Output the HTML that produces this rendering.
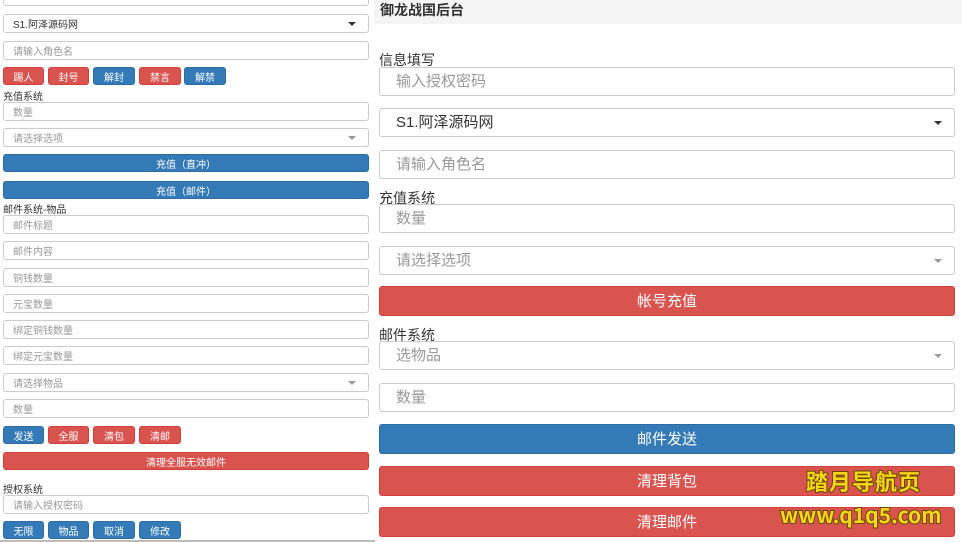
<!DOCTYPE html>
<html><head><meta charset="utf-8"><style>
body{margin:0;width:962px;height:542px;overflow:hidden;background:#fff;font-family:"Liberation Sans","Noto Sans CJK SC",sans-serif;position:relative;line-height:1}
.a{position:absolute;box-sizing:border-box}
.in{border:1px solid #ccc;border-radius:3px;background:#fff;color:#999;padding-left:9px;display:flex;align-items:center;line-height:normal}
.s{font-size:10px;height:19px}
.b{font-size:15px;height:29px;padding-left:16px;padding-bottom:2px}
.dk{color:#333}
.car::after{content:"";position:absolute;right:12px;top:50%;margin-top:-2px;border:4px solid transparent;border-top:4px solid #999;border-bottom:0}
.dkc::after{border-top-color:#333}
.bt{border-radius:3px;color:#fff;display:flex;align-items:center;justify-content:center;font-size:10px;height:18px;line-height:normal}
.r{background:#d9534f;border:1px solid #d43f3a}
.u{background:#337ab7;border:1px solid #2e6da4}
.lb{font-size:10px;color:#333}
.big{height:30px;font-size:15px;padding-bottom:1px}
.lbb{font-size:14px;color:#333}
.wm{color:#f7d51d;font-weight:bold;-webkit-text-stroke:2px #6a4a00;paint-order:stroke fill;font-family:"Noto Sans CJK SC","Liberation Sans",sans-serif}
</style></head><body>
<div class="a in s" style="left:3px;top:-13px;width:366px"></div>
<div class="a in s dk car dkc" style="left:3px;top:14px;width:366px">S1.阿泽源码网</div>
<div class="a in s" style="left:3px;top:41px;width:366px">请输入角色名</div>
<div class="a bt r" style="left:3px;top:67px;width:41px">踢人</div>
<div class="a bt r" style="left:48px;top:67px;width:41px">封号</div>
<div class="a bt u" style="left:93px;top:67px;width:42px">解封</div>
<div class="a bt r" style="left:139px;top:67px;width:42px">禁言</div>
<div class="a bt u" style="left:184px;top:67px;width:42px">解禁</div>
<div class="a lb" style="left:3px;top:93px">充值系统</div>
<div class="a in s" style="left:3px;top:102px;width:366px">数量</div>
<div class="a in s car" style="left:3px;top:128px;width:366px">请选择选项</div>
<div class="a bt u" style="left:3px;top:154px;width:366px">充值（直冲）</div>
<div class="a bt u" style="left:3px;top:181px;width:366px">充值（邮件）</div>
<div class="a lb" style="left:3px;top:206px">邮件系统-物品</div>
<div class="a in s" style="left:3px;top:215px;width:366px">邮件标题</div>
<div class="a in s" style="left:3px;top:241px;width:366px">邮件内容</div>
<div class="a in s" style="left:3px;top:268px;width:366px">铜钱数量</div>
<div class="a in s" style="left:3px;top:294px;width:366px">元宝数量</div>
<div class="a in s" style="left:3px;top:320px;width:366px">绑定铜钱数量</div>
<div class="a in s" style="left:3px;top:346px;width:366px">绑定元宝数量</div>
<div class="a in s car" style="left:3px;top:373px;width:366px">请选择物品</div>
<div class="a in s" style="left:3px;top:399px;width:366px">数量</div>
<div class="a bt u" style="left:3px;top:426px;width:41px">发送</div>
<div class="a bt r" style="left:48px;top:426px;width:41px">全服</div>
<div class="a bt r" style="left:93px;top:426px;width:42px">清包</div>
<div class="a bt r" style="left:139px;top:426px;width:42px">清邮</div>
<div class="a bt r" style="left:3px;top:452px;width:366px">清理全服无效邮件</div>
<div class="a lb" style="left:3px;top:486px">授权系统</div>
<div class="a in s" style="left:3px;top:495px;width:366px">请输入授权密码</div>
<div class="a bt u" style="left:3px;top:521px;width:41px">无限</div>
<div class="a bt u" style="left:48px;top:521px;width:41px">物品</div>
<div class="a bt u" style="left:93px;top:521px;width:42px">取消</div>
<div class="a bt u" style="left:139px;top:521px;width:42px">修改</div>
<div class="a" style="left:0;top:540px;width:375px;height:2px;background:#bbb"></div>

<div class="a" style="left:374px;top:0;width:588px;height:24px;background:#f5f5f5"></div>
<div class="a" style="left:380px;top:3px;font-size:14px;font-weight:bold;color:#333">御龙战国后台</div>
<div class="a lbb" style="left:379px;top:53px">信息填写</div>
<div class="a in b" style="left:379px;top:67px;width:576px">输入授权密码</div>
<div class="a in b dk car dkc" style="left:379px;top:108px;width:576px">S1.阿泽源码网</div>
<div class="a in b" style="left:379px;top:150px;width:576px">请输入角色名</div>
<div class="a lbb" style="left:379px;top:191px">充值系统</div>
<div class="a in b" style="left:379px;top:204px;width:576px">数量</div>
<div class="a in b car" style="left:379px;top:246px;width:576px">请选择选项</div>
<div class="a bt r big" style="left:379px;top:286px;width:576px">帐号充值</div>
<div class="a lbb" style="left:379px;top:328px">邮件系统</div>
<div class="a in b car" style="left:379px;top:341px;width:576px">选物品</div>
<div class="a in b" style="left:379px;top:383px;width:576px">数量</div>
<div class="a bt u big" style="left:379px;top:424px;width:576px">邮件发送</div>
<div class="a bt r big" style="left:379px;top:466px;width:576px">清理背包</div>
<div class="a bt r big" style="left:379px;top:507px;width:576px">清理邮件</div>
<div class="a wm" style="left:806px;top:470px;font-size:22px;letter-spacing:1px">踏月导航页</div>
<div class="a wm" style="left:780px;top:505px;font-size:21px">www.q1q5.com</div>
</body></html>
